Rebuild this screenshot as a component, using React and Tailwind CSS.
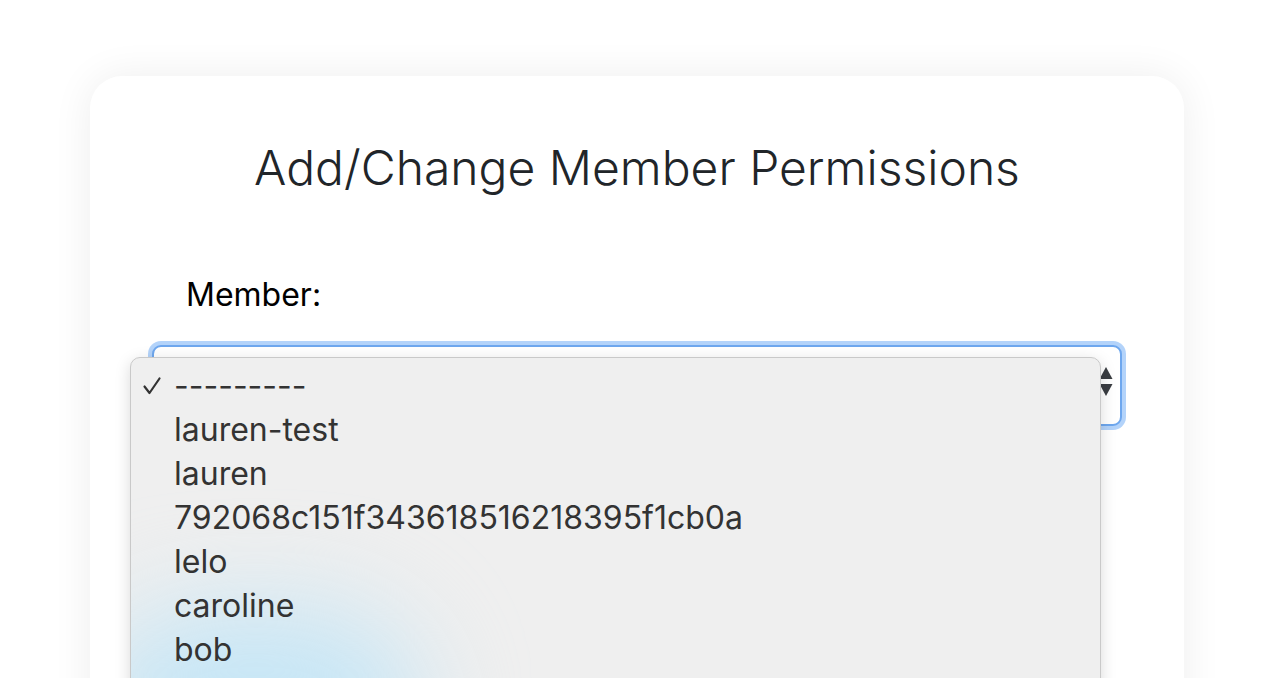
import { useState } from "react";

const MEMBERS = [
  "---------",
  "lauren-test",
  "lauren",
  "792068c151f343618516218395f1cb0a",
  "lelo",
  "caroline",
  "bob",
];

function Check() {
  return (
    <svg width="20" height="20" viewBox="0 0 20 20" fill="none" className="shrink-0">
      <path d="M2.5 10.5 L7.5 17 L17.5 2.5" stroke="#333" strokeWidth="2.2" strokeLinecap="round" strokeLinejoin="round" />
    </svg>
  );
}

function Arrows() {
  return (
    <svg width="14" height="32" viewBox="0 0 14 32" className="absolute right-[9px] top-[22px]">
      <path d="M7 0 L13.5 12 L0.5 12 Z" fill="#3a3d42" />
      <path d="M0.5 17 L13.5 17 L7 29 Z" fill="#3a3d42" />
    </svg>
  );
}

export default function App() {
  const [selected] = useState(0);

  return (
    <div className="h-[678px] overflow-hidden bg-white pt-[76px] pl-[90px] pr-[88px]" style={{ fontFamily: "Inter, 'Noto Sans', sans-serif" }}>
      <div className="rounded-[32px] bg-white shadow-[0_0_40px_rgba(0,0,0,0.07)] px-[62px] pt-[63px] pb-[400px]">
        <h1 className="text-center text-[48px] leading-[1.2] font-light text-[#212529]">
          Add/Change Member Permissions
        </h1>

        <label className="block mt-[74px] ml-[34px] text-[32px] leading-[1.5] text-black">Member:</label>

        <div className="relative mt-[26px]">
          <div className="h-[81px] rounded-[9px] border-2 border-[#6ea7ee] bg-white ring-4 ring-[#b3d3fa]">
            <Arrows />
          </div>

          <div className="absolute left-[-22px] top-[12px] w-[971px] h-[400px] overflow-hidden rounded-[10px] border border-[#c9c9c9] bg-[#efefef] shadow-[0_4px_16px_rgba(0,0,0,0.15)]">
            <div className="absolute left-[-40px] top-[250px] w-[330px] h-[220px] rounded-full bg-[#c6e6f6] blur-[50px]" />
            <ul className="relative pt-[6px]">
              {MEMBERS.map((m, i) => (
                <li key={m} className="flex items-center h-[44px] text-[32px] text-[#333]">
                  <span className="w-[43px] pl-[11px] flex items-center">{i === selected ? <Check /> : null}</span>
                  <span>{m}</span>
                </li>
              ))}
            </ul>
          </div>
        </div>
      </div>
    </div>
  );
}
